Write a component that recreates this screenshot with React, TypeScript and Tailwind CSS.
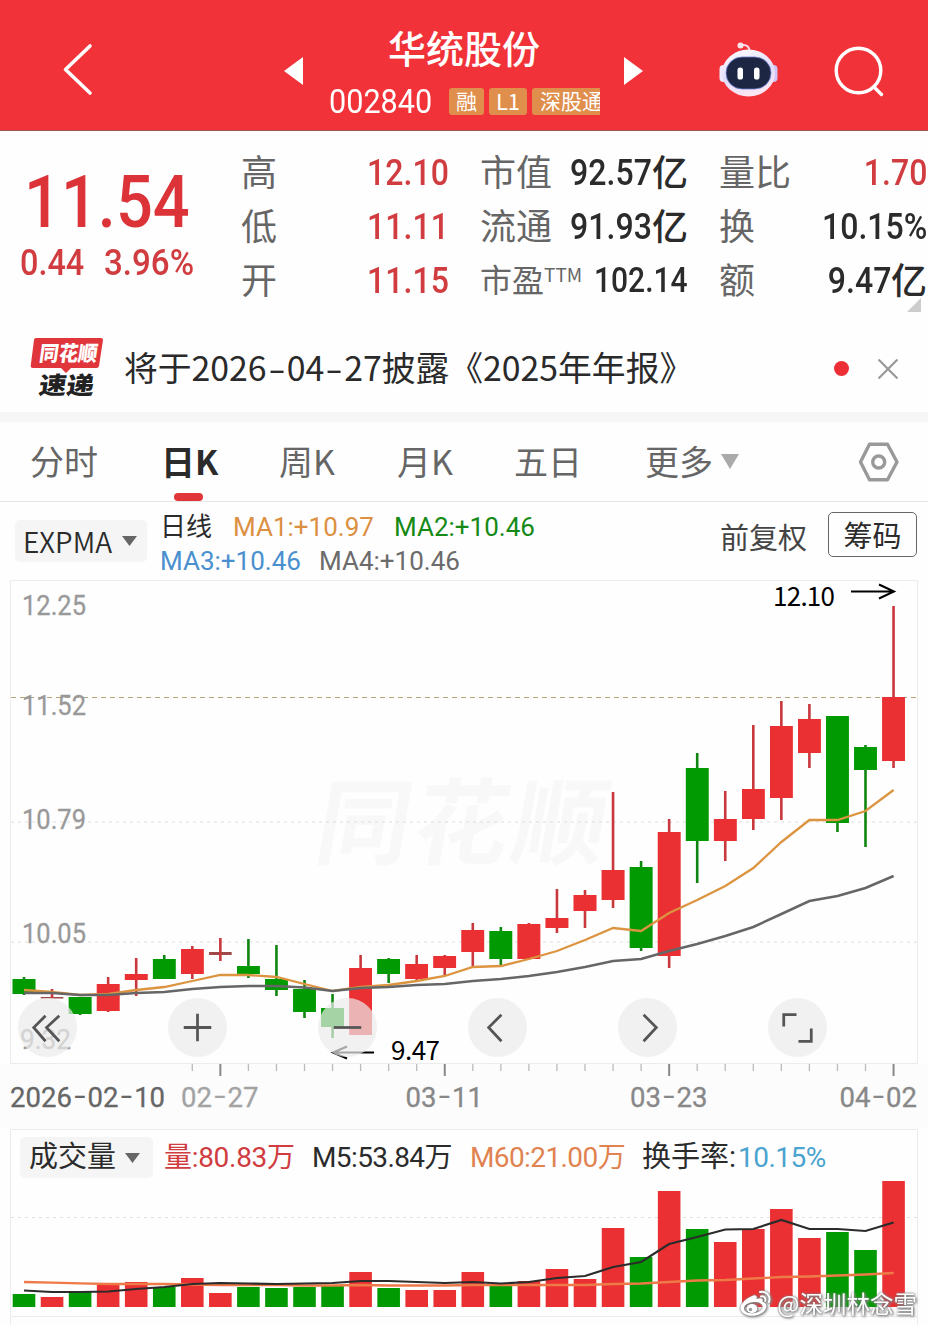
import type { ReactNode } from "react";

const NUM = "font-[Roboto,'Noto_Sans_CJK_SC',sans-serif]";
const RED = "#eb3033";
const GREEN = "#029a02";

// [direction, open/close top, open/close bottom, high, low, volume top]
type Candle = [1 | -1, number, number, number, number, number];

const candles: Candle[] = [
  [-1, 979, 994, 977, 995, 1294],
  [1, 997, 998.5, 989, 998, 1297],
  [-1, 997, 1014, 997, 1015, 1292],
  [1, 984, 1011, 977, 1012, 1285],
  [1, 974, 980, 958, 996, 1282],
  [-1, 959, 979, 955, 979, 1287],
  [1, 949, 974, 946, 979, 1278],
  [1, 952, 955, 938, 961, 1293],
  [-1, 966, 974, 939, 978, 1287],
  [-1, 979, 990, 945, 996, 1288],
  [-1, 989, 1012, 980, 1018, 1287],
  [-1, 1008, 1027, 994, 1038, 1286],
  [1, 968, 1035, 955, 1035, 1272],
  [-1, 959, 974, 958, 983, 1288],
  [1, 964, 979, 955, 981, 1290],
  [1, 956, 968, 955, 976, 1290],
  [1, 930, 952, 923, 967, 1272],
  [-1, 931, 959, 927, 966, 1286],
  [1, 924, 959, 923, 960, 1281],
  [1, 918, 928, 889, 933, 1269],
  [1, 895, 911, 890, 928, 1279],
  [1, 870, 900, 792, 908, 1228],
  [-1, 867, 948, 861, 951, 1257],
  [1, 832, 956, 819, 968, 1191],
  [-1, 768, 841, 753, 883, 1229],
  [1, 819, 841, 791, 861, 1242],
  [1, 789, 819, 725, 830, 1229],
  [1, 726, 798, 701, 820, 1209],
  [1, 719, 753, 704, 768, 1238],
  [-1, 716, 823, 716, 832, 1232],
  [-1, 747, 770, 745, 847, 1250],
  [1, 697, 761, 606, 768, 1181],
];

const ma1 = [
  990, 992, 995, 994, 990, 987, 981, 975, 975, 977, 984, 991, 987, 985, 981, 976,
  967, 966, 959, 951, 940, 928, 931, 913, 900, 886, 868, 842, 820, 820, 811, 790,
];
const ma4 = [
  993, 993, 995, 995, 993, 992, 989, 987, 986, 986, 987.5, 991, 988, 987, 985, 984,
  981, 979, 976, 972, 967, 961, 959, 951, 944, 936, 927, 914, 901, 896, 888, 876,
];
const vol5 = [
  1290.5, 1292, 1292, 1291.5, 1289, 1287, 1284, 1283, 1283.5, 1284, 1283.5, 1283, 1281, 1281, 1282, 1283,
  1282, 1283.5, 1282, 1278, 1276, 1267, 1262, 1244, 1237, 1229.5, 1229, 1220, 1229, 1229, 1231, 1222.5,
];
const vol60 = [
  1282, 1282.7, 1283.4, 1284, 1284, 1284, 1284.5, 1285, 1285, 1285, 1285.5, 1285.5, 1285, 1285.5, 1285.5, 1285.5,
  1285, 1285, 1285, 1285, 1285, 1284, 1283.5, 1282, 1280.5, 1280, 1278.5, 1277, 1276.5, 1275.5, 1274.5, 1273,
];

const cx = (i: number) => 24 + i * 28.05;
const line = (ys: number[]) => ys.map((y, i) => `${cx(i).toFixed(1)},${y}`).join(" ");
const color = (dir: number) => (dir > 0 ? RED : GREEN);

function Header() {
  return (
    <header className="flex h-[131px] items-start border-b border-[#9b5552] bg-[#f13239] pl-[62px] text-white">
      <svg className="mt-[42px]" width="32" height="54" fill="none" stroke="#fff" strokeWidth="3.6" strokeLinecap="round" strokeLinejoin="round">
        <path d="M28 4 3.5 27.500 28 51" />
      </svg>
      <svg className="mt-[56px] ml-[190px]" width="20" height="30" fill="#fff">
        <path d="M0 15 19 1v28z" />
      </svg>
      <div className="ml-[26px] flex w-[270px] flex-col items-center pt-[24px]">
        <h1 className="-ml-[2px] text-[38px] leading-[46px] font-medium">华统股份</h1>
        <div className="mt-[12px] flex h-[38px] w-full items-center overflow-hidden whitespace-nowrap">
          <span className="w-[119px] shrink-0">
            <span className={`${NUM} -ml-[1px] inline-block origin-left scale-x-90 text-[34px] leading-[38px] font-[450]`}>002840</span>
          </span>
          <span className="h-[27px] w-[35px] shrink-0 rounded-[3px] bg-[#e08e4c] text-center text-[21px] leading-[25px]">融</span>
          <span className="ml-[5px] h-[27px] w-[38px] shrink-0 rounded-[3px] bg-[#e08e4c] text-center text-[22px] leading-[25px]">L1</span>
          <span className="ml-[5px] h-[27px] w-[80px] shrink-0 rounded-l-[3px] bg-[#e08e4c] pl-[8px] text-[21px] leading-[25px]">深股通</span>
        </div>
      </div>
      <svg className="mt-[56px] ml-[24px]" width="20" height="30" fill="#fff">
        <path d="M0 1v28l19-14z" />
      </svg>
      <svg className="mt-[41px] ml-[75px]" width="60" height="57" viewBox="0 0 60 57">
        <defs>
          <linearGradient id="bot" x1="0" y1="0" x2="0.300" y2="1">
            <stop offset="0" stopColor="#fff" />
            <stop offset="0.600" stopColor="#e2dcfb" />
            <stop offset="1" stopColor="#fbe6f2" />
          </linearGradient>
        </defs>
        <path d="M23 4q7-1 8 7" fill="none" stroke="#f9dcea" strokeWidth="2" />
        <circle cx="21.500" cy="4.500" r="3" fill="#fbe4ec" />
        <rect x="0.500" y="24" width="8" height="17" rx="4" fill="#efe9fd" />
        <rect x="50.500" y="24" width="8" height="17" rx="4" fill="#cfc4f8" />
        <ellipse cx="29.500" cy="32" rx="26.500" ry="23.500" fill="url(#bot)" />
        <rect x="7" y="16" width="45" height="32" rx="16" fill="#1d2744" stroke="#6b7fd0" strokeWidth="0.800" />
        <rect x="18.500" y="26.500" width="5.500" height="12" rx="2.600" fill="#fff" />
        <rect x="35" y="26.500" width="5.500" height="12" rx="2.600" fill="#fff" />
      </svg>
      <svg className="mt-[45px] ml-[54px]" width="52" height="54" fill="none" stroke="#fff" strokeWidth="3.400" strokeLinecap="round">
        <circle cx="25.500" cy="25.500" r="22.300" />
        <path d="m41 42 7.500 7.500" />
      </svg>
    </header>
  );
}

type QuoteProps = { label: string; value: string; unit?: string; red?: boolean; ttm?: boolean };

function Quote({ label, value, unit, red, ttm }: QuoteProps) {
  return (
    <div className="flex h-[54px] items-center justify-between whitespace-nowrap">
      <span className={`pb-[7px] text-[#666] ${ttm ? "text-[32px]" : "text-[36px]"}`}>
        {label}
        {ttm && <sup className="top-[-10px] text-[19px] leading-none">TTM</sup>}
      </span>
      <span className={`flex items-center font-medium ${red ? "text-[#d03c3f]" : "text-[#2b2b2b]"}`}>
        <span
          className={`${NUM} -ml-[12px] inline-block origin-right pb-[1px] ${ttm ? "scale-x-[0.870] text-[34.500px]" : "scale-x-[0.890] text-[36px]"}`}
        >
          {value}
        </span>
        {unit && <span className="pb-[6px] text-[36px]">{unit}</span>}
      </span>
    </div>
  );
}

function Quotes() {
  return (
    <section className="flex h-[190px] pt-[15px]">
      <div className={`${NUM} w-[241px] whitespace-nowrap text-[#dc3338]`}>
        <div className="mt-[18px] ml-[24px] inline-block origin-left scale-x-[0.890] text-[73px] leading-[76px] font-medium">11.54</div>
        <div className="mt-[3px] flex text-[36px] leading-[40px] font-medium text-[#d03c3f]">
          <span className="ml-[20px] w-[84px] origin-left scale-x-[0.900]">0.44</span>
          <span className="origin-left scale-x-[0.920]">3.96%</span>
        </div>
      </div>
      <div className="w-[208px]">
        <Quote label="高" value="12.10" red />
        <Quote label="低" value="11.11" red />
        <Quote label="开" value="11.15" red />
      </div>
      <div className="ml-[31px] w-[208px]">
        <Quote label="市值" value="92.57" unit="亿" />
        <Quote label="流通" value="91.93" unit="亿" />
        <Quote label="市盈" value="102.14" ttm />
      </div>
      <div className="relative ml-[31px] w-[208px]">
        <Quote label="量比" value="1.70" red />
        <Quote label="换" value="10.15%" />
        <Quote label="额" value="9.47" unit="亿" />
        <svg className="absolute top-[152px] right-[6px]" width="14" height="14" fill="#ccc">
          <path d="M14 0v14H0z" />
        </svg>
      </div>
    </section>
  );
}

function Dash() {
  return <span className="inline-block w-[20px] scale-x-150 text-center">-</span>;
}

function News() {
  return (
    <section className="flex h-[91px] items-center pt-[4px] pl-[30px]">
      <svg className="overflow-visible" width="74" height="64" viewBox="0 0 74 64" fontFamily="'Noto Sans CJK SC', sans-serif" fontWeight="900">
        <path d="M6 1h65q2 0 2 2l-4 26q-.500 2-2.500 2H41l-5 5-5-5H3q-2.500 0-2.300-2L4 3q.300-2 2-2z" fill="#e0353a" />
        <text x="12" y="24" fontSize="21" fill="#fff" transform="skewX(-8)" textLength="58" lengthAdjust="spacingAndGlyphs">同花顺</text>
        <text x="16" y="57" fontSize="24" fill="#222" transform="skewX(-8)" textLength="55" lengthAdjust="spacingAndGlyphs">速递</text>
      </svg>
      <p className="ml-[20px] w-[710px] pb-[3px] text-[33.800px] leading-[40px] whitespace-nowrap text-[#2a2a2a]">
        将于2026<Dash />04<Dash />27披露《2025年年报》
      </p>
      <span className="h-[15px] w-[15px] rounded-full bg-[#ed2f35]" />
      <svg className="ml-[29px]" width="20" height="20" stroke="#999" strokeWidth="2.200">
        <path d="m.500.500 19 19M19.500.500l-19 19" />
      </svg>
    </section>
  );
}

function Tab({ children, width, active }: { children: ReactNode; width: string; active?: boolean }) {
  return (
    <div className={`${width} relative flex h-full items-center pb-[3px] whitespace-nowrap ${active ? "font-bold text-[#2b2b2b]" : "text-[#666]"}`}>
      {children}
      {active && <span className="absolute bottom-0 left-[13px] h-[8px] w-[29px] rounded-[4px] bg-[#e0363a]" />}
    </div>
  );
}

function Tabs() {
  return (
    <nav className="flex h-[90px] items-center border-t-[10px] border-b border-t-[#f6f6f6] border-b-[#e6e6e6] pl-[30px] text-[34px]">
      <Tab width="w-[131px]">分时</Tab>
      <Tab width="w-[118px]" active>日K</Tab>
      <Tab width="w-[118px]">周K</Tab>
      <Tab width="w-[117px]">月K</Tab>
      <Tab width="w-[131px]">五日</Tab>
      <Tab width="w-[213px]">
        更多
        <svg className="mt-[2px] ml-[8px]" width="18" height="17" fill="#aaa">
          <path d="M0 1h18L9 16z" />
        </svg>
      </Tab>
      <svg width="42" height="40" fill="none" stroke="#999" strokeWidth="3.400" strokeLinejoin="round">
        <path d="M11.500 2.200h18L39 20l-9.500 17.800h-18L2.500 20z" />
        <circle cx="20.700" cy="20" r="6" />
      </svg>
    </nav>
  );
}

function Caret() {
  return (
    <svg width="15" height="12" fill="#666">
      <path d="M0 1h15L7.500 11z" />
    </svg>
  );
}

function Indicators() {
  return (
    <div className="flex h-[78px] pl-[15px]">
      <div className="mt-[18px] flex h-[42px] w-[132px] items-center gap-[8px] rounded-[5px] bg-[#f5f5f5] pl-[8px] text-[28px] font-[350] text-[#2b2b2b]">
        <span className="w-[91px] pb-[1px]">EXPMA</span>
        <Caret />
      </div>
      <div className={`${NUM} ml-[13px] w-[561px] pt-[8px] text-[26px] leading-[34px] whitespace-nowrap`}>
        <div className="flex h-[34px]">
          <span className="w-[73px] text-[#2b2b2b]">日线</span>
          <span className="w-[161px] text-[#dc9042]">MA1:+10.97</span>
          <span className="text-[#168a16]">MA2:+10.46</span>
        </div>
        <div className="flex h-[34px]">
          <span className="w-[159px] text-[#4a90cf]">MA3:+10.46</span>
          <span className="text-[#6b6b6b]">MA4:+10.46</span>
        </div>
      </div>
      <span className="mt-[14px] -ml-[1px] text-[29px] leading-[40px] text-[#444]">前复权</span>
      <span className="mt-[10px] ml-[21px] h-[45px] w-[89px] rounded-[5px] border border-[#666] text-center text-[29px] leading-[43px] text-[#2b2b2b]">
        筹码
      </span>
    </div>
  );
}

const controls = [
  "M28 18 16 30l12 14M42 18 29 30l13 14",
  "M30 16v28M16 30h28",
  "M16 30h28",
  "M34 17 21 30l13 14",
  "M26 17 39 30 26 44",
  "M16 29V17h13M44 31v13H31",
];

function PriceChart() {
  return (
    <section className="relative mx-[10px] h-[484px] w-[908px] border border-[#ececec]">
      <svg className="block" width="906" height="482" viewBox="11 581 906 482" fontFamily="Roboto, sans-serif">
        <text x="314" y="857" fontSize="94" fontWeight="700" fontFamily="'Noto Sans CJK SC', sans-serif" fill="#f8f8f8" textLength="290" transform="translate(149 0) skewX(-10)">
          同花顺
        </text>
        <path d="M11 822h906M11 942h906" stroke="#dedede" strokeDasharray="3 4" />
        <path d="M11 697.500h906" stroke="#b3a57a" strokeDasharray="5 4" />
        <g fontSize="28.500" fill="#999" strokeWidth="0.300" stroke="#999">
          <text x="22" y="614.500" textLength="64" lengthAdjust="spacingAndGlyphs">12.25</text>
          <text x="22" y="714.500" textLength="64" lengthAdjust="spacingAndGlyphs">11.52</text>
          <text x="22" y="828.500" textLength="64" lengthAdjust="spacingAndGlyphs">10.79</text>
          <text x="22" y="942.500" textLength="64" lengthAdjust="spacingAndGlyphs">10.05</text>
          <text x="20" y="1049" textLength="51" lengthAdjust="spacingAndGlyphs">9.32</text>
        </g>
        {candles.map(([dir, top, bottom, high, low], i) => {
          // nearly unchanged sessions are drawn as a thin cross bar
          const flat = bottom - top <= 3;
          return (
            <g key={i} fill={color(dir)}>
              <rect x={cx(i) - 11.3} y={top} width="22.600" height={bottom - top} fill={flat ? "#a0494b" : color(dir)} />
              <rect x={cx(i) - 1.3} y={high} width="2.600" height={low - high} fill={dir > 0 ? "#c8383c" : "#0f860f"} />
              {!flat && <rect x={cx(i) - 11.3} y={top} width="22.600" height={bottom - top} />}
            </g>
          );
        })}
        <polyline points={line(ma1)} fill="none" stroke="#dc9440" strokeWidth="2.300" />
        <polyline points={line(ma4)} fill="none" stroke="#666" strokeWidth="2.500" />
        <g fontSize="26" fontFamily="'Noto Sans CJK SC', sans-serif" fill="#000">
          <text x="773" y="606" textLength="62">12.10</text>
          <text x="391" y="1059.500" textLength="49">9.47</text>
        </g>
        <g fill="none" stroke="#000" strokeWidth="2">
          <path d="M851 591.500h42M879 584.500l15 7-15 7" />
          <path d="M374 1052.500h-40M347 1046.500l-14 6 14 6" />
        </g>
      </svg>
      <div className="absolute top-[417px] left-[7px] flex gap-[91px]">
        {controls.map((d) => (
          <button key={d} className="h-[59px] w-[59px] rounded-full bg-[#ebebeb]/70">
            <svg width="59" height="59" viewBox="0 0 60 60" fill="none" stroke="#555" strokeWidth="2.800">
              <path d={d} />
            </svg>
          </button>
        ))}
      </div>
    </section>
  );
}

function DateLabel({ x, value, fill }: { x: number; value: string; fill: string }) {
  return (
    <text x={x} y="1106.500" fill={fill} stroke={fill} strokeWidth="0.300">
      {value.split("").map((c, i) =>
        c === "-" ? (
          <tspan key={i} dx="1.500" fontSize="38" fontWeight="300" fontFamily="'Noto Sans CJK SC', sans-serif">-</tspan>
        ) : (
          <tspan key={i} dx={value[i - 1] === "-" ? "1.500" : "0"}>{c}</tspan>
        ),
      )}
    </text>
  );
}

function DateAxis() {
  return (
    <svg className="block bg-[#fcfcfc]" width="928" height="65" viewBox="0 1064 928 65" fontFamily="Roboto, sans-serif" fontSize="27.500">
      {candles.map((_, i) =>
        i < 6 ? null : i % 8 === 7 ? (
          <path key={i} d={`M${cx(i)} 1064v12`} stroke="#888" strokeWidth="2" />
        ) : (
          <path key={i} d={`M${cx(i)} 1064v7`} stroke="#bbb" strokeWidth="1.300" />
        ),
      )}
      <DateLabel x={10} value="2026-02-10" fill="#666" />
      <DateLabel x={181} value="02-27" fill="#a3a3a3" />
      <DateLabel x={405.5} value="03-11" fill="#888" />
      <DateLabel x={630} value="03-23" fill="#888" />
      <DateLabel x={839.5} value="04-02" fill="#888" />
    </svg>
  );
}

function Volume() {
  return (
    <section className="relative mx-[10px] h-[196px] w-[908px] border border-b-0 border-[#ececec]">
      <div className={`${NUM} flex h-[49px] items-start pt-[7px] pl-[9px] text-[28px] leading-[41px] whitespace-nowrap`}>
        <div className="flex h-[41px] w-[133px] items-center gap-[9px] rounded-[5px] bg-[#f5f5f5] pl-[9px] text-[29px] text-[#2b2b2b]">
          成交量
          <Caret />
        </div>
        <span className="ml-[11px] w-[148px] tracking-[-0.300px] text-[#d03c3f]">量:80.83万</span>
        <span className="w-[158px] tracking-[-0.600px] text-[#2b2b2b]">M5:53.84万</span>
        <span className="w-[172px] tracking-[-0.600px] text-[#e08350]">M60:21.00万</span>
        <span className="flex text-[#2b2b2b]">
          <span className="w-[96px] text-[29px]">换手率:</span>
          <span className="tracking-[-0.500px] text-[#4ba3cf]">10.15%</span>
        </span>
      </div>
      <svg className="block" width="906" height="146" viewBox="11 1179 906 146">
        <path d="M11 1217.500h906" stroke="#e2e2e2" strokeDasharray="3 4" />
        {candles.map(([dir, , , , , top], i) => (
          <rect key={i} x={cx(i) - 11.3} y={top} width="22.600" height={1307 - top} fill={color(dir)} />
        ))}
        <polyline points={line(vol60)} fill="none" stroke="#ee7a48" strokeWidth="2.300" />
        <polyline points={line(vol5)} fill="none" stroke="#2b2b2b" strokeWidth="2.200" />
        <path d="M11 1316.500h906" stroke="#ececec" />
      </svg>
      <div className="absolute right-0 bottom-[6px] flex items-center gap-[5px] whitespace-nowrap text-white [filter:drop-shadow(0_0_1px_#777)_drop-shadow(1px_1px_1px_#888)]">
        <svg width="32" height="28" viewBox="0 0 32 28" fill="none" stroke="#fff">
          <path fill="#fff" stroke="none" fillRule="evenodd" d="M12 6c3-1.500 5.500-.500 4.600 3 4-1.700 7.200-.800 6 2.800 7 2.200 4 11.200-6 13.500C8.500 27.300 0 23.500.500 17.500.900 13 7 8 12 6zm2 6c-6 .300-10.500 3.500-10 7 .500 3.300 5.500 5 11 4 5.200-1 8.200-4 7.500-7-.600-2.700-4-4.200-8.500-4z" />
          <ellipse cx="12" cy="18.500" rx="5.300" ry="4.500" fill="#fff" stroke="none" />
          <circle cx="10.500" cy="19.500" r="1.700" fill="#999" stroke="none" />
          <path d="M20 2c6-1.500 11 3.500 9 10M21 6.500c3-.700 5 1.500 4.200 4.500" strokeWidth="2" strokeLinecap="round" />
        </svg>
        <span className="pb-[1px] text-[23.500px] leading-[30px]">@深圳林念雪</span>
      </div>
    </section>
  );
}

export default function App() {
  return (
    <main className="h-[1325px] w-[928px] overflow-hidden bg-[#fefefe] font-['Noto_Sans_CJK_SC',sans-serif]">
      <Header />
      <Quotes />
      <News />
      <Tabs />
      <Indicators />
      <PriceChart />
      <DateAxis />
      <Volume />
    </main>
  );
}
